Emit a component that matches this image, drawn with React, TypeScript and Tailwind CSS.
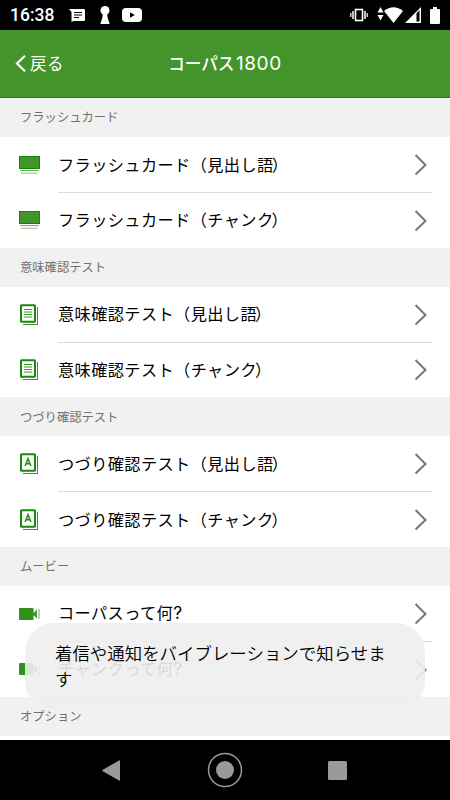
import type { ReactNode } from 'react';

function CardsIcon() {
  return (
    <svg width="22" height="20" viewBox="0 0 22 20">
      <rect x="0.5" y="1.5" width="20" height="12" fill="#43942a" stroke="#0b8a06" />
      <path d="M1 15.5h19" stroke="#6fb45c" />
      <path d="M2 18.2h16.5" stroke="#8cc47c" />
    </svg>
  );
}

function PaperIcon({ children }: { children: ReactNode }) {
  return (
    <svg width="22" height="22" viewBox="0 0 22 22" fill="none">
      <rect x="2" y="1.2" width="14" height="16.5" rx="0.5" stroke="#168c0a" strokeWidth="2" />
      <path d="M18.5 3v17.5M4 20.5h15" stroke="#43942a" />
      {children}
    </svg>
  );
}

function ListIcon() {
  return (
    <PaperIcon>
      <path d="M5 5.5h8M5 8h8M5 10.5h8M5 13h8" stroke="#43942a" />
    </PaperIcon>
  );
}

function SpellIcon() {
  return (
    <PaperIcon>
      <path d="M6.1 13 9 5.7l2.9 7.3M7 10.8h4" stroke="#2c8f18" strokeWidth="1.6" />
    </PaperIcon>
  );
}

function MovieIcon() {
  return (
    <svg width="22" height="14" viewBox="0 0 22 14">
      <rect x="0" y="1" width="14.5" height="12" rx="1" fill="#2f9119" />
      <path d="M14 5.5h1l3-3v9l-3-3h-1z" fill="#43942a" />
      <path d="M20 2v10" stroke="#a3cf96" strokeWidth="1.6" />
    </svg>
  );
}

const sections = [
  { title: 'フラッシュカード', icon: <CardsIcon />, items: ['フラッシュカード（見出し語）', 'フラッシュカード（チャンク）'] },
  { title: '意味確認テスト', icon: <ListIcon />, items: ['意味確認テスト（見出し語）', '意味確認テスト（チャンク）'] },
  { title: 'つづり確認テスト', icon: <SpellIcon />, items: ['つづり確認テスト（見出し語）', 'つづり確認テスト（チャンク）'] },
  { title: 'ムービー', icon: <MovieIcon />, items: ['コーパスって何?', 'チャンクって何?'] },
  { title: 'オプション', icon: null, items: [] },
];

function StatusBar() {
  return (
    <div className="flex h-[30px] shrink-0 items-center justify-between bg-black pr-[10px] pl-[10px] text-white">
      <div className="flex items-center">
        <span className="w-[59px] font-[Roboto] text-[17.5px] leading-[30px] font-medium">16:38</span>
        <svg width="17" height="15" viewBox="0 0 17 15" className="shrink-0">
          <path d="M0 1h15a1 1 0 0 1 1 1v10a1 1 0 0 1-1 1H4.5l-2 1V4z" fill="#fff" />
          <path d="M5 4.5h8M5 7h8M5 9.5h5" stroke="#000" strokeWidth="1.1" />
        </svg>
        <svg width="10" height="18" viewBox="0 0 10 18" className="ml-[14px] shrink-0" fill="#fff">
          <circle cx="5" cy="4.5" r="4.5" />
          <path d="M3 7h4l.7 5L9.7 18H.3l2-6z" />
        </svg>
        <svg width="20" height="14" viewBox="0 0 20 14" className="ml-[12px] shrink-0">
          <rect width="20" height="14" rx="4" fill="#fff" />
          <path d="M8 4.2v5.6L12.8 7z" fill="#000" />
        </svg>
      </div>
      <div className="flex items-center">
        <svg width="18" height="14" viewBox="0 0 18 14" fill="none" stroke="#fff">
          <rect x="5.5" y="1.5" width="7" height="11" strokeWidth="1.6" />
          <path d="M3 3v8M15 3v8" strokeWidth="1.5" />
          <path d="M.8 5v4M17.2 5v4" strokeWidth="1.2" />
        </svg>
        <svg width="7" height="14" viewBox="0 0 7 14" className="mb-[2px] ml-[9px]" fill="#fff">
          <path d="M3.5 0l3 5.5h-6zM3.5 13.5l3-5.5h-6z" />
        </svg>
        <svg width="19" height="16" viewBox="0 0 19 16" fill="#fff">
          <path d="M0 4Q9.5-3.5 19 4L9.500 16z" />
        </svg>
        <svg width="17" height="16" viewBox="0 0 17 16" className="ml-[2px]">
          <path d="M0 16 16 0v16z" fill="#fff" />
          <path d="M11.5 6.5 14.5 3v11.5h-3z" fill="#000" />
        </svg>
        <svg width="10" height="17" viewBox="0 0 10 17" className="ml-[8px]" fill="#fff">
          <path d="M3 0h4v2h2a1 1 0 0 1 1 1v13a1 1 0 0 1-1 1H1a1 1 0 0 1-1-1V3a1 1 0 0 1 1-1h2z" />
        </svg>
      </div>
    </div>
  );
}

function Header() {
  return (
    <header className="grid h-[68px] shrink-0 grid-cols-3 items-center border-b border-[#16860c] bg-[#43942a] text-white">
      <div className="flex items-center pl-[15px]">
        <svg width="12" height="17" viewBox="0 0 12 17" fill="none">
          <path d="M10 .8 2 8.5l8 7.7" stroke="#fff" strokeWidth="2.2" />
        </svg>
        <span className="ml-[3px] text-[16.5px] tracking-[0.5px]">戻る</span>
      </div>
      <h1 className="text-center text-[16.6px] font-medium whitespace-nowrap">
        コーパス
        <span className="ml-[1.5px] font-[Inter] text-[19px] leading-[24px] font-normal tracking-[0.6px]">1800</span>
      </h1>
    </header>
  );
}

function Label({ text }: { text: string }) {
  const last = text.slice(-1);
  return (
    <span className="pb-[1.5px] text-[16.2px] tracking-[0.4px] text-black">
      {text.slice(0, -1)}
      {last === '?' ? (
        <span className="font-[Inter] text-[17.5px] leading-[24px]">?</span>
      ) : (
        <span className="-ml-[2px]">{last}</span>
      )}
    </span>
  );
}

function Row({ icon, label, divider }: { icon: ReactNode; label: string; divider: boolean }) {
  return (
    <li className={divider ? 'flex h-[55.8px]' : 'flex h-[54.8px]'}>
      <div className="flex w-[58px] shrink-0 items-center pl-[19px]">{icon}</div>
      <div
        className={
          divider
            ? 'mr-[18px] flex flex-1 items-center justify-between border-b border-[#dcdcdc]'
            : 'mr-[18px] flex flex-1 items-center justify-between'
        }
      >
        <Label text={label} />
        <svg width="14" height="23" viewBox="0 0 14 23" fill="none" className="mr-[4px]">
          <path d="M1.5 2 11.5 12l-10 9.500" stroke="#777" strokeWidth="2" />
        </svg>
      </div>
    </li>
  );
}

function Toast() {
  return (
    <div className="absolute top-[623px] left-[25px] h-[87px] w-[400px] rounded-[29px] bg-[#eeeeee]/90 pt-[17px] pl-[30px]">
      <p className="text-[17.45px] leading-[26px] font-[350] text-black">
        着信や通知をバイブレーションで知らせま
        <br />す
      </p>
    </div>
  );
}

function NavBar() {
  return (
    <nav className="flex h-[60px] shrink-0 items-center justify-between bg-black pr-[103px] pl-[102px]">
      <svg width="19" height="21" viewBox="0 0 19 21" fill="#9a9a9a">
        <path d="M.8 9.7 17 .5q1-.5 1 .5v19q0 1-1 .5L.8 11.3q-1-.8 0-1.600z" />
      </svg>
      <svg width="36" height="36" viewBox="0 0 36 36">
        <circle cx="18" cy="18" r="16.5" fill="none" stroke="#9a9a9a" strokeWidth="1.5" />
        <circle cx="18" cy="18" r="9" fill="#9a9a9a" />
      </svg>
      <div className="size-[19px] rounded-[1.5px] bg-[#9a9a9a]" />
    </nav>
  );
}

export default function App() {
  return (
    <div className="relative flex h-[800px] w-[450px] flex-col overflow-hidden bg-white font-['Noto_Sans_CJK_JP',sans-serif]">
      <StatusBar />
      <Header />
      <main className="min-h-0 flex-1 overflow-hidden">
        {sections.map((s) => (
          <section key={s.title}>
            <h2 className="flex h-[39.1px] items-center bg-[#f1f1f1] pl-[20px] text-[12.3px] text-[#707070]">{s.title}</h2>
            <ul>
              {s.items.map((label, i) => (
                <Row key={label} icon={s.icon} label={label} divider={i === 0} />
              ))}
            </ul>
          </section>
        ))}
      </main>
      <NavBar />
      <Toast />
    </div>
  );
}
